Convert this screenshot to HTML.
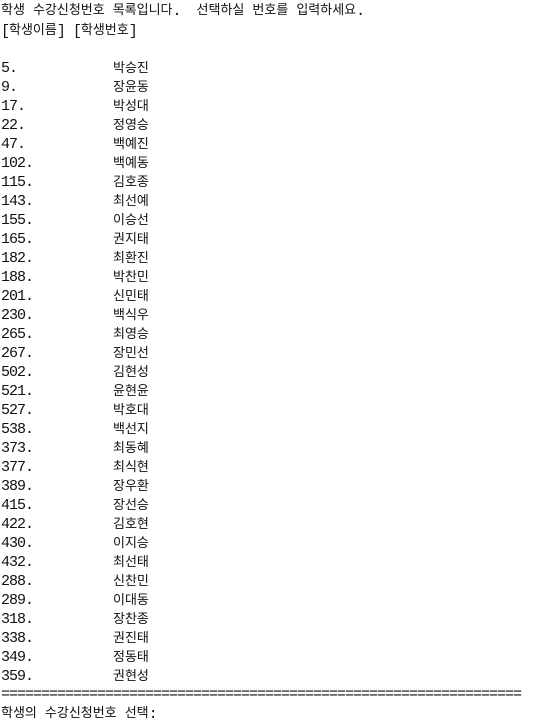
<!DOCTYPE html>
<html><head><meta charset="utf-8"><style>
body{margin:0;background:#fff;width:534px;height:727px;overflow:hidden;}
.l{position:absolute;left:1px;height:19px;line-height:19px;white-space:pre;font-family:"Liberation Mono",monospace;font-size:15px;letter-spacing:-1px;color:#111;}
.k{font-family:"Noto Sans CJK KR","NanumGothic",sans-serif;font-size:13px;letter-spacing:0;position:relative;top:-1px;}
.num{position:absolute;left:0;top:2px;}
.n{position:absolute;left:112px;top:0;}
</style></head><body>
<div id="c"></div>
<div class="l" style="top:0"><span class="k">학생</span> <span class="k">수강신청번호</span> <span class="k">목록입니다</span>.  <span class="k">선택하실</span> <span class="k">번호를</span> <span class="k">입력하세요</span>.</div>
<div class="l" style="top:20px">[<span class="k">학생이름</span>] [<span class="k">학생번호</span>]</div>
<script>
var d=[["5.","박승진"],["9.","장윤동"],["17.","박성대"],["22.","정영승"],["47.","백예진"],["102.","백예동"],["115.","김호종"],["143.","최선예"],["155.","이승선"],["165.","권지태"],["182.","최환진"],["188.","박찬민"],["201.","신민태"],["230.","백식우"],["265.","최영승"],["267.","장민선"],["502.","김현성"],["521.","윤현윤"],["527.","박호대"],["538.","백선지"],["373.","최동혜"],["377.","최식현"],["389.","장우환"],["415.","장선승"],["422.","김호현"],["430.","이지승"],["432.","최선태"],["288.","신찬민"],["289.","이대동"],["318.","장찬종"],["338.","권진태"],["349.","정동태"],["359.","권현성"]];
var h="";
for(var i=0;i<d.length;i++){h+='<div class="l" style="top:'+(57+i*19)+'px"><span class="num">'+d[i][0]+'</span><span class="k n">'+d[i][1]+'</span></div>';}
h+='<div class="l" style="top:'+(57+33*19+1)+'px">'+"=".repeat(65)+'</div>';
h+='<div class="l" style="top:'+(57+34*19)+'px"><span class="k">학생의</span> <span class="k">수강신청번호</span> <span class="k">선택</span>:</div>';
document.getElementById("c").innerHTML=h;
</script>
</body></html>
